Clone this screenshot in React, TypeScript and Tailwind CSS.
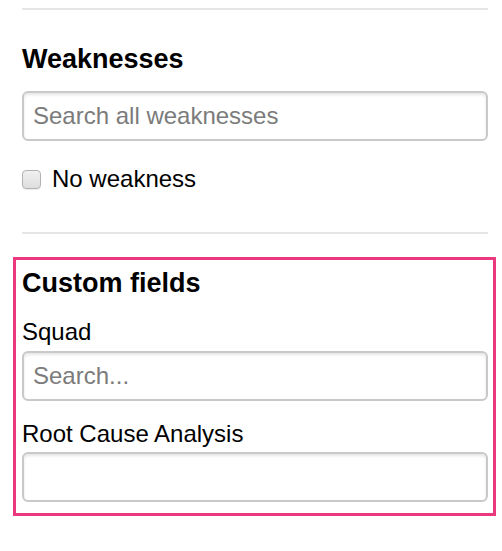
import React from "react";

const font = { fontFamily: '"Liberation Sans", Arial, sans-serif' };

function TextInput({ placeholder = "" }: { placeholder?: string }) {
  return (
    <input
      type="text"
      placeholder={placeholder}
      className="block h-[50px] w-full rounded-[6px] border-2 border-[#c9c9c9] bg-white pl-[9px] pr-3 text-[24px] text-[#111] shadow-[inset_0_2px_3px_rgba(0,0,0,0.10)] outline-none placeholder:text-[#7b7b7b]"
    />
  );
}

export default function App() {
  return (
    <div className="w-[502px] bg-white text-black" style={font}>
      {/* Weaknesses */}
      <div className="pl-[22px] pr-[14px]">
        <div className="mt-[8px] h-[2px] bg-[#e6e6e6]" />
        <h3 className="mt-[33px] h-[32px] text-[27px] font-bold leading-[32px]">Weaknesses</h3>
        <div className="mt-[16px]">
          <TextInput placeholder="Search all weaknesses" />
        </div>
        <label className="mt-[26px] flex h-[24px] items-center gap-[11px] text-[24px] leading-[24px]">
          <span className="h-[19px] w-[19px] shrink-0 rounded-[4px] border border-[#b3b3b3] bg-gradient-to-b from-[#f0f0f0] to-[#dedede] shadow-[0_1px_1px_rgba(0,0,0,0.08)]" />
          No weakness
        </label>
        <div className="mt-[41px] h-[2px] bg-[#e6e6e6]" />
      </div>

      {/* Custom fields */}
      <div className="ml-[13px] mr-[6px] mt-[23px] border-[3px] border-[#ea3a7d] pb-[11px] pl-[6px] pr-[5px] pt-[7px]">
        <h3 className="h-[32px] text-[27px] font-bold leading-[32px]">Custom fields</h3>
        <div className="mt-[19px] h-[28px] text-[24px] leading-[28px]">Squad</div>
        <div className="mt-[5px]">
          <TextInput placeholder="Search..." />
        </div>
        <div className="mt-[19px] h-[28px] text-[24px] leading-[28px]">Root Cause Analysis</div>
        <div className="mt-[4px]">
          <TextInput />
        </div>
      </div>
    </div>
  );
}
